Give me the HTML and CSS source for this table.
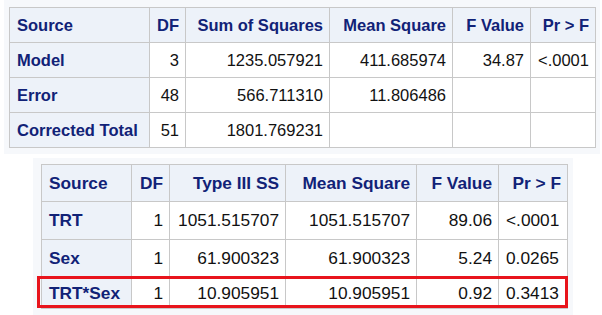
FILE: index.html
```html
<!DOCTYPE html>
<html lang="en">
    <head>
        <meta charset="UTF-8">
        <title>ANOVA</title>
        <link rel="stylesheet" href="styles.css">
    </head>
    <body>
        <div class="panel panel-model">
            <table class="anova anova-model">
                <colgroup>
                    <col style="width:140px"><col style="width:36px"><col style="width:144px">
                    <col style="width:123px"><col style="width:78px"><col style="width:65px">
                </colgroup>
                <tr>
                    <th class="src">Source</th>
                    <th>DF</th>
                    <th>Sum of Squares</th>
                    <th>Mean Square</th>
                    <th>F Value</th>
                    <th>Pr &gt; F</th>
                </tr>
                <tr>
                    <th class="src">Model</th>
                    <td>3</td>
                    <td>1235.057921</td>
                    <td>411.685974</td>
                    <td>34.87</td>
                    <td class="p">&lt;.0001</td>
                </tr>
                <tr>
                    <th class="src">Error</th>
                    <td>48</td>
                    <td>566.711310</td>
                    <td>11.806486</td>
                    <td></td>
                    <td></td>
                </tr>
                <tr>
                    <th class="src">Corrected Total</th>
                    <td>51</td>
                    <td>1801.769231</td>
                    <td></td>
                    <td></td>
                    <td></td>
                </tr>
            </table>
        </div>

        <div class="panel panel-type3">
            <table class="anova anova-type3">
                <colgroup>
                    <col style="width:90px"><col style="width:38px"><col style="width:116px">
                    <col style="width:131px"><col style="width:82px"><col style="width:69px">
                </colgroup>
                <tr class="head">
                    <th class="src">Source</th>
                    <th>DF</th>
                    <th>Type III SS</th>
                    <th>Mean Square</th>
                    <th>F Value</th>
                    <th>Pr &gt; F</th>
                </tr>
                <tr>
                    <th class="src">TRT</th>
                    <td>1</td>
                    <td>1051.515707</td>
                    <td>1051.515707</td>
                    <td>89.06</td>
                    <td class="p">&lt;.0001</td>
                </tr>
                <tr>
                    <th class="src">Sex</th>
                    <td>1</td>
                    <td>61.900323</td>
                    <td>61.900323</td>
                    <td>5.24</td>
                    <td class="p">0.0265</td>
                </tr>
                <tr class="last">
                    <th class="src">TRT*Sex</th>
                    <td>1</td>
                    <td>10.905951</td>
                    <td>10.905951</td>
                    <td>0.92</td>
                    <td class="p">0.3413</td>
                </tr>
            </table>
            <div class="highlight"></div>
        </div>
    </body>
</html>
```

FILE: styles.css
```css
body {
    margin: 0;
    background: #fff;
    font-family: "Liberation Sans", Arial, sans-serif;
}
.panel {
    background: #f6f8fb;
}
.panel-model {
    margin-left: 4px;
    width: 586px;
    padding: 7px 5px 6px 5px;
}
.panel-type3 {
    position: relative;
    margin: 4px 0 0 33px;
    width: 527px;
    padding: 6px 5px 8px 8px;
}
.anova {
    border-collapse: collapse;
    table-layout: fixed;
    background: #fff;
}
.anova th,
.anova td {
    border: 1px solid #c8c8c8;
    padding: 0 6px 0 7px;
    text-align: right;
    white-space: nowrap;
    overflow: hidden;
}
.anova th {
    background: #edf2f9;
    color: #112277;
    font-weight: bold;
}
.anova td {
    color: #111;
}
.anova .src,
.anova .p {
    text-align: left;
}
.anova-model {
    width: 587px;
    font-size: 16.5px;
}
.anova-model tr {
    height: 35px;
}
.anova-type3 {
    width: 527px;
    font-size: 17.3px;
}
.anova-type3 tr {
    height: 38px;
}
.anova-type3 tr.head {
    height: 37px;
}
.anova-type3 tr.last {
    height: 31px;
}
.highlight {
    position: absolute;
    left: 4px;
    top: 118px;
    width: 525px;
    height: 26px;
    border: 3px solid #e8141c;
}
```
